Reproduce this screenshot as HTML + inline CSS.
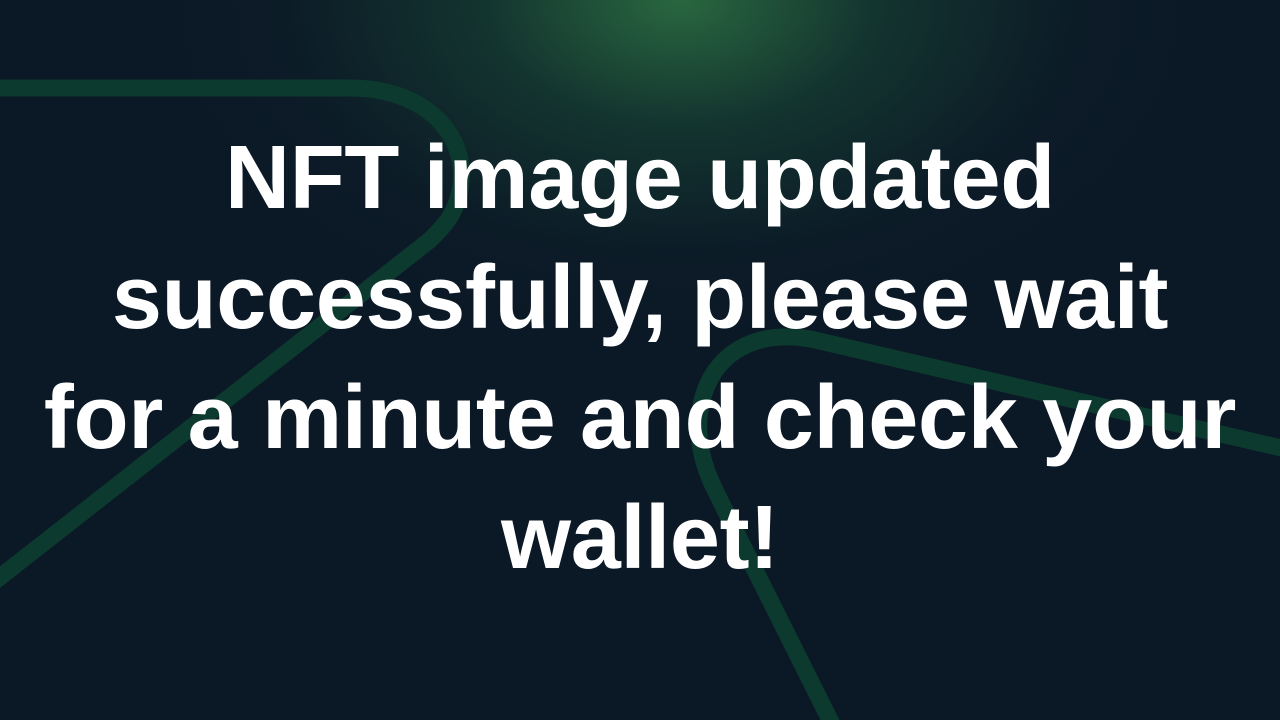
<!DOCTYPE html>
<html><head><meta charset="utf-8"><style>
html,body{margin:0;padding:0}
body{width:1280px;height:720px;overflow:hidden;background:#0b1826;position:relative;font-family:"Liberation Sans",sans-serif}
.glow{position:absolute;left:0;top:0;width:1280px;height:720px;background:radial-gradient(ellipse 560px 360px at 680px 0px,rgba(44,112,66,0.9) 0%,rgba(28,80,56,0.5) 35%,rgba(15,45,45,0.18) 70%,rgba(11,24,38,0) 100%)}
svg{position:absolute;left:0;top:0}
h1{position:absolute;left:0;top:118px;width:1280px;margin:0;text-align:center;color:#fff;font-weight:700;font-size:90px;line-height:120px;letter-spacing:-0.3px}
</style></head><body>
<div class="glow"></div>
<svg width="1280" height="720" viewBox="0 0 1280 720">
<g fill="none" stroke="#0c3a2e" stroke-width="17" stroke-linecap="round">
<path d="M-10 88 L350 88 C430 88 470 140 460 190 C455 215 445 225 430 240 L-10 585"/>
<path d="M1290 450 L815 340 C760 328 710 350 700 410 C695 440 705 470 715 490 L835 730"/>
</g>
</svg>
<h1>NFT image updated<br>successfully, please wait<br>for a minute and check your<br>wallet!</h1>
</body></html>
